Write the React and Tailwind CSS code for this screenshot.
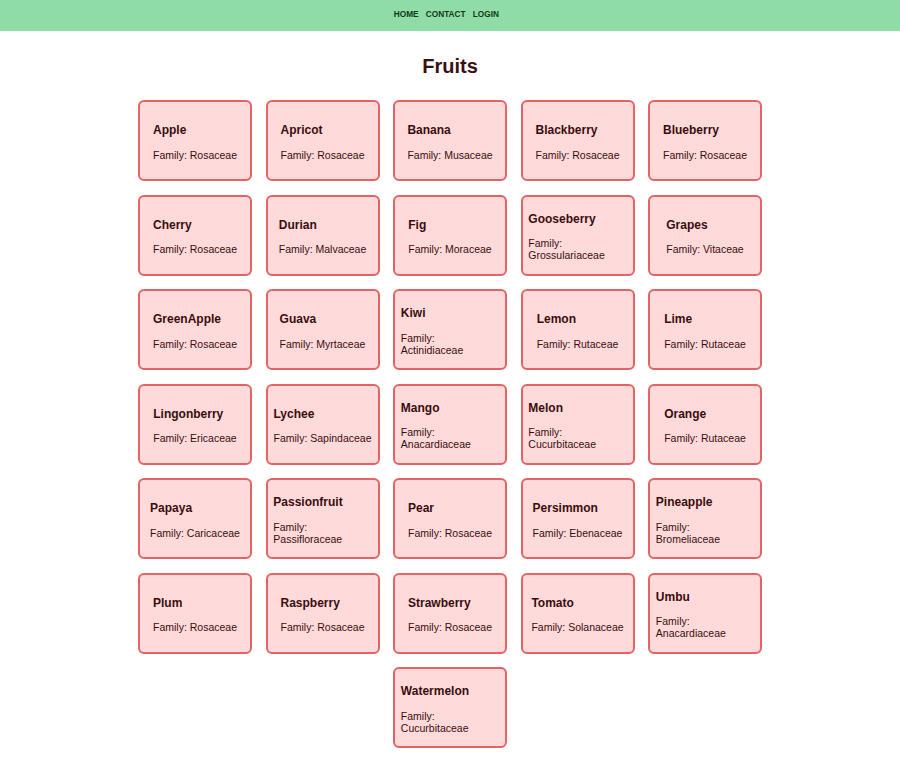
import React from 'react';

const fruits = [
  ['Apple', 'Rosaceae'],
  ['Apricot', 'Rosaceae'],
  ['Banana', 'Musaceae'],
  ['Blackberry', 'Rosaceae'],
  ['Blueberry', 'Rosaceae'],
  ['Cherry', 'Rosaceae'],
  ['Durian', 'Malvaceae'],
  ['Fig', 'Moraceae'],
  ['Gooseberry', 'Grossulariaceae'],
  ['Grapes', 'Vitaceae'],
  ['GreenApple', 'Rosaceae'],
  ['Guava', 'Myrtaceae'],
  ['Kiwi', 'Actinidiaceae'],
  ['Lemon', 'Rutaceae'],
  ['Lime', 'Rutaceae'],
  ['Lingonberry', 'Ericaceae'],
  ['Lychee', 'Sapindaceae'],
  ['Mango', 'Anacardiaceae'],
  ['Melon', 'Cucurbitaceae'],
  ['Orange', 'Rutaceae'],
  ['Papaya', 'Caricaceae'],
  ['Passionfruit', 'Passifloraceae'],
  ['Pear', 'Rosaceae'],
  ['Persimmon', 'Ebenaceae'],
  ['Pineapple', 'Bromeliaceae'],
  ['Plum', 'Rosaceae'],
  ['Raspberry', 'Rosaceae'],
  ['Strawberry', 'Rosaceae'],
  ['Tomato', 'Solanaceae'],
  ['Umbu', 'Anacardiaceae'],
  ['Watermelon', 'Cucurbitaceae'],
];

function FruitCard({ name, family }) {
  return (
    <div className="w-[114px] h-[81px] rounded-[6px] border-2 border-[#e36464] bg-[#ffdada] px-[5.85px] pt-[3px] flex flex-col justify-center items-center">
      <div className="text-left">
        <h3 className="text-[12px] leading-[14px] font-bold text-[#3a0d0d] mb-[11.5px]">{name}</h3>
        <p className="text-[10.5px] leading-[12px] text-[#3a0d0d]">Family: {family}</p>
      </div>
    </div>
  );
}

export default function App() {
  return (
    <div className="min-h-screen bg-white" style={{ fontFamily: '"Liberation Sans", Arial, sans-serif' }}>
      <nav className="h-[31px] bg-[#90dca7] flex items-center justify-center">
        {['HOME', 'CONTACT', 'LOGIN'].map((link) => (
          <a key={link} href="#" className="mr-[7.3px] text-[8.25px] font-bold text-[#0f3a17]">
            {link}
          </a>
        ))}
      </nav>

      <main className="pt-[23.5px] pb-8">
        <h1 className="text-center text-[20px] leading-[23px] font-bold text-[#3c0f0f]">Fruits</h1>
        <div className="mt-[22.5px] mx-auto w-[624px] flex flex-wrap justify-center gap-[13.5px]">
          {fruits.map(([name, family]) => (
            <FruitCard key={name} name={name} family={family} />
          ))}
        </div>
      </main>
    </div>
  );
}
